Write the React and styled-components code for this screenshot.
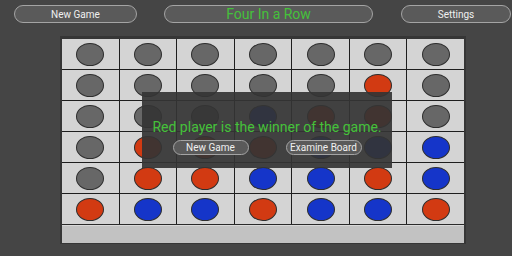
import React from "react";
import styled, { createGlobalStyle } from "styled-components";

const G = "g";
const R = "r";
const B = "b";

// top row first
const board = [
  [G, G, G, G, G, G, G],
  [G, G, G, G, G, R, G],
  [G, G, G, B, R, R, G],
  [G, R, R, R, B, B, B],
  [G, R, R, B, B, R, B],
  [R, B, B, R, B, B, R],
];

const discColors = {
  g: "#676767",
  r: "#d23a12",
  b: "#1535c9",
};

function App() {
  return (
    <>
      <GlobalStyle />
      <Screen>
        <Header>
          <PillButton $width={123}>New Game</PillButton>
          <TitleBar>Four In a Row</TitleBar>
          <PillButton $width={110}>Settings</PillButton>
        </Header>
        <BoardArea>
          <BoardFrame>
            <Grid>
              {board.map((row, r) =>
                row.map((c, i) => (
                  <Cell key={`${r}-${i}`}>
                    <Disc $color={discColors[c]} />
                  </Cell>
                )),
              )}
            </Grid>
            <Tray />
            <WinnerPanel>
              <WinnerText>Red player is the winner of the game.</WinnerText>
              <PanelActions>
                <SmallButton>New Game</SmallButton>
                <SmallButton>Examine Board</SmallButton>
              </PanelActions>
            </WinnerPanel>
          </BoardFrame>
        </BoardArea>
      </Screen>
    </>
  );
}

export default App;

const GlobalStyle = createGlobalStyle`
  html, body {
    margin: 0;
    padding: 0;
    background: #454545;
    font-family: Roboto, "Liberation Sans", sans-serif;
  }
`;

const Screen = styled.div`
  width: 512px;
  height: 256px;
  background: #454545;
  overflow: hidden;
`;

const Header = styled.header`
  display: flex;
  align-items: center;
  gap: 27px;
  padding: 5px 0 0 14px;
  height: 18px;
`;

const PillButton = styled.div`
  width: ${({ $width }) => $width}px;
  height: 18px;
  box-sizing: border-box;
  border: 1px solid #a4a4a4;
  border-radius: 9px;
  background: #5a5a5a;
  color: #f0f0f0;
  font-size: 10px;
  display: flex;
  align-items: center;
  justify-content: center;
`;

const TitleBar = styled(PillButton)`
  width: 209px;
  margin-right: 1px;
  color: #45c13a;
  font-size: 14px;
`;

const BoardArea = styled.main`
  padding: 13px 0 0 60px;
`;

const BoardFrame = styled.div`
  position: relative;
  width: 406px;
  box-sizing: border-box;
  background: #363636;
  padding: 3px 2px 1px 2px;
`;

const Grid = styled.div`
  display: grid;
  grid-template-columns: repeat(7, 1fr);
  grid-template-rows: repeat(6, 30px);
  gap: 1px;
  background: #1e1e1e;
  border-bottom: 1px solid #2a2a2a;
`;

const Cell = styled.div`
  background: #d4d4d4;
  display: flex;
  align-items: center;
  justify-content: center;
`;

const Disc = styled.div`
  width: 28px;
  height: 23px;
  box-sizing: border-box;
  border-radius: 50%;
  border: 1px solid #2e2e2e;
  background: ${({ $color }) => $color};
`;

const Tray = styled.div`
  height: 17px;
  background: #c2c2c2;
  border-top: 1px solid #d8d8d8;
`;

const WinnerPanel = styled.div`
  position: absolute;
  left: 82px;
  top: 56px;
  width: 250px;
  height: 76px;
  background: rgba(52, 52, 52, 0.92);
  display: flex;
  flex-direction: column;
  align-items: center;
  padding-top: 26px;
  box-sizing: border-box;
`;

const WinnerText = styled.div`
  color: #45c13a;
  font-size: 14px;
  line-height: 18px;
`;

const PanelActions = styled.div`
  display: flex;
  gap: 37px;
  margin-top: 4px;
`;

const SmallButton = styled.div`
  width: 76px;
  height: 15px;
  box-sizing: border-box;
  border: 1px solid #a4a4a4;
  border-radius: 8px;
  background: #5a5a5a;
  color: #f0f0f0;
  font-size: 10px;
  display: flex;
  align-items: center;
  justify-content: center;
`;
